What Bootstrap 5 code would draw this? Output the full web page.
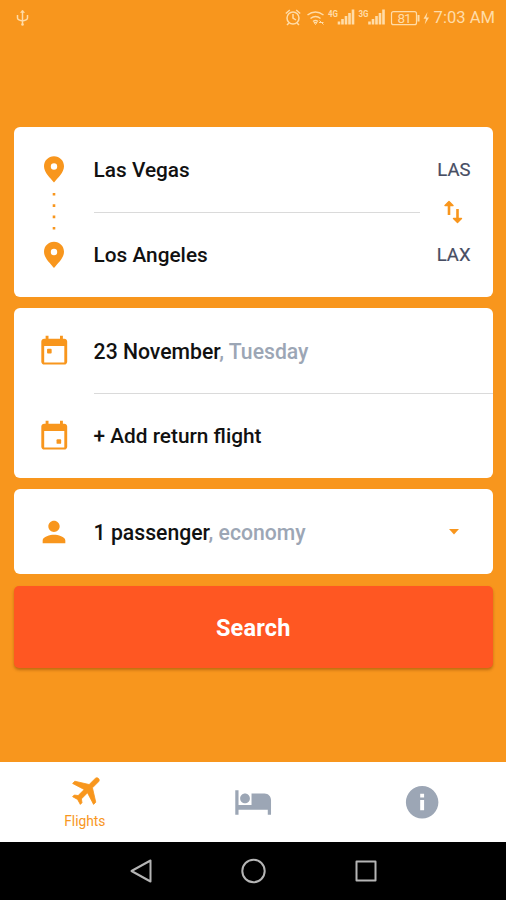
<!DOCTYPE html>
<html lang="en">
<head>
<meta charset="utf-8">
<meta name="viewport" content="width=device-width, initial-scale=1">
<title>Flights</title>
<link href="https://cdn.jsdelivr.net/npm/bootstrap@5.3.0/dist/css/bootstrap.min.css" rel="stylesheet">
<style>
  :root { --brand: #f8961d; --action: #ff5722; --muted: #9ca6b5; }
  body { font-family: Roboto, sans-serif; background: var(--brand); }
  svg { display: block; flex: none; }
  .app-screen { height: 900px; overflow: hidden; background: var(--brand); }
  .status-bar { height: 36px; color: #ffdca8; padding-left: 16px; padding-right: 11px; }
  .status-bar .clock { font-size: 16.6px; line-height: 36px; }
  .search-form { padding: 91px 13.5px 0 14px; gap: 11px; }
  .panel { border: 0; border-radius: 6px; color: #111; font-size: 20.8px; font-weight: 500; }
  .field-row { height: 85px; padding-top: 2px; }
  .icon-cell { width: 79.6px; height: 85px; color: var(--brand); }
  .airport-code { color: #474d63; font-weight: 400; font-size: 18.5px; -webkit-text-stroke: .2px #474d63; }
  .route-side { width: 73px; padding-right: 22px; }
  .hint { color: var(--muted); }
  .field-wide { font-size: 21.2px; }
  .rule { height: 86px; margin-bottom: -1px; border-bottom: 1px solid #dadada; }
  .btn-search { height: 82px; margin-top: 1px; padding-top: 9px; border: 0; border-radius: 5px; background: var(--action); color: #fff; font-size: 23.5px; font-weight: 700; letter-spacing: .2px; box-shadow: 0 2px 3px rgba(120,60,0,.45); }
  .btn-search:hover { background: var(--action); color: #fff; }
  .tab-bar { height: 80px; color: var(--muted); }
  .tab-bar .active-tab { color: var(--brand); font-size: 13.8px; padding-left: 1px; }
  .system-bar { height: 58px; background: #000; }
</style>
</head>
<body>
<div class="app-screen d-flex flex-column">
  <header class="status-bar d-flex align-items-center justify-content-between">
    <svg width="13" height="18" viewBox="0 0 13 18" fill="none" stroke="currentColor" stroke-width="1.5"><path d="M6.500 2v13M1.500 6v3q0 2 5 3q5-1 5-3V6"/><path d="M4.500 3.500l2-2.500 2 2.500z" fill="currentColor" stroke-width=".5"/><circle cx="6.500" cy="15.500" r="1.300" fill="currentColor" stroke="none"/></svg>
    <div class="d-flex align-items-center">
      <svg width="149" height="36" viewBox="285 0 149 36" fill="none" stroke="currentColor" stroke-width="1.500">
        <circle cx="293" cy="18" r="6"/><path d="M293 14v4l3 2M285.800 13.500l4-3.500M300.200 13.500l-4-3.500M289 23l-2 2M297 23l2 2"/>
        <path d="M307.500 15q8-6 16 0M310.500 18.500q5-4 10 0M313 21.500q2.500-2 5 0"/><path d="M315.500 24.500l-1.500-2h3zM319 22.500h4.500M319.500 20.500l4 4" stroke-width="1"/>
        <text x="328" y="16.500" font-size="8.500" font-weight="700" fill="currentColor" stroke="none" textLength="10" lengthAdjust="spacingAndGlyphs">4G</text>
        <path stroke-width="2.600" d="M339 24.500v-3M342.500 24.500v-5.500M346 24.500v-8.500M349.500 24.500v-11.500M353 24.500v-15M369.500 24.500v-3M373 24.500v-5.500M376.500 24.500v-8.500M380 24.500v-11.500M383.500 24.500v-15"/>
        <text x="358.500" y="16.500" font-size="8.500" font-weight="700" fill="currentColor" stroke="none" textLength="10" lengthAdjust="spacingAndGlyphs">3G</text>
        <rect x="391.500" y="11.700" width="25" height="13" rx="2" stroke-width="1.200"/><path d="M418.500 15v6.500" stroke-width="2"/>
        <text x="397.500" y="23.100" font-size="13.500" fill="currentColor" stroke="none" textLength="14">81</text>
        <path d="M427.500 12l-4 6.800h2.500l-1.300 5.700 4.300-7h-2.700z" fill="currentColor" stroke="none"/>
      </svg>
      <span class="clock">7:03 AM</span>
    </div>
  </header>

  <main class="search-form d-flex flex-column flex-grow-1">
    <section class="panel card flex-row">
      <div class="icon-cell h-auto">
        <svg width="79" height="170" viewBox="-.5 0 79 170" fill="currentColor">
          <path id="pin" fill-rule="evenodd" d="M39.500 29.300c-5.600 0-10 4.400-10 9.900 0 6.300 6.200 11.500 10 16.300 3.800-4.800 10-10 10-16.300 0-5.500-4.400-9.900-10-9.900zm0 7a3.200 3.200 0 1 1 0 6.400 3.200 3.200 0 0 1 0-6.400z"/>
          <use href="#pin" y="85.500"/>
          <path d="M38.200 66h2.600v2.600h-2.600zM38.200 77.300h2.600v2.600h-2.600zM38.200 88.600h2.600v2.600h-2.600zM38.200 100h2.600v2.600h-2.600z"/>
        </svg>
      </div>
      <div class="flex-grow-1">
        <div class="field-row rule d-flex align-items-center">Las Vegas</div>
        <div class="field-row d-flex align-items-center">Los Angeles</div>
      </div>
      <div class="route-side d-flex flex-column align-items-end">
        <div class="airport-code field-row d-flex align-items-center">LAS</div>
        <div class="airport-code field-row d-flex align-items-center">LAX</div>
        <svg class="position-absolute top-50 translate-middle-y me-1" width="32" height="28" viewBox="1.500 0 32 28" fill="none" stroke="#f8961d" stroke-width="2.600"><path d="M15.500 4v13M24 11v12"/><path d="M11.500 7.500l4-4 4 4zM20 20.500l4 4 4-4z" fill="#f8961d" stroke-width="1.400" stroke-linejoin="round"/></svg>
      </div>
    </section>

    <section class="panel card">
      <div class="d-flex">
        <div class="icon-cell d-flex align-items-center justify-content-center pt-1">
          <svg width="34.500" height="34.500" viewBox="0 .4 24 24" fill="currentColor"><path id="cal" d="M19 3h-1V1h-2v2H8V1H6v2H5c-1.100 0-2 .9-2 2v14c0 1.100.9 2 2 2h14c1.100 0 2-.9 2-2V5c0-1.100-.9-2-2-2zm0 16.500H5V8h14z"/><rect x="7" y="10" width="3.200" height="3.200" rx=".6"/></svg>
        </div>
        <div class="field-row field-wide rule d-flex align-items-center flex-grow-1"><span>23 November<span class="hint">, Tuesday</span></span></div>
      </div>
      <div class="d-flex">
        <div class="icon-cell d-flex align-items-center justify-content-center pt-1">
          <svg width="34.500" height="34.500" viewBox="0 .4 24 24" fill="currentColor"><use href="#cal"/><rect x="13.600" y="13.800" width="3.200" height="3.200" rx=".6"/></svg>
        </div>
        <div class="field-row d-flex align-items-center">+ Add return flight</div>
      </div>
    </section>

    <section class="panel card flex-row align-items-center">
      <div class="icon-cell d-flex align-items-center justify-content-center">
        <svg width="34" height="34" viewBox="0 0 24 24" fill="currentColor"><path d="M12 12c2.210 0 4-1.790 4-4s-1.790-4-4-4-4 1.790-4 4 1.790 4 4 4zm0 2c-2.670 0-8 1.340-8 4v2h16v-2c0-2.660-5.330-4-8-4z"/></svg>
      </div>
      <div class="field-row field-wide d-flex align-items-center flex-grow-1"><span>1 passenger<span class="hint">, economy</span></span></div>
      <svg class="me-4" width="30" height="20" viewBox="0 0 30 20" fill="#f8961d"><path d="M10 7h10l-5 5.500z"/></svg>
    </section>

    <button type="button" class="btn btn-search w-100">Search</button>
  </main>

  <nav class="tab-bar row g-0 bg-white">
    <div class="col-4 active-tab d-flex flex-column align-items-center">
      <svg width="40" height="49" viewBox="0 0 40 49" fill="currentColor" stroke="currentColor" stroke-width=".5" stroke-linejoin="round"><path transform="translate(22.500 27.500) rotate(45) scale(1.560) translate(-11.500 -12)" d="M21 16v-2l-8-5V3.500c0-.83-.67-1.500-1.500-1.500S10 2.670 10 3.500V9l-8 5v2l8-2.500V19l-2 1.500V22l3.500-1 3.500 1v-1.500L13 19v-5.500l8 2.500z"/></svg>
      <span>Flights</span>
    </div>
    <div class="col-4 d-flex align-items-center justify-content-center">
      <svg width="39" height="39" viewBox="-.4 .5 24 24" fill="currentColor"><path d="M7 13c1.660 0 3-1.340 3-3S8.660 7 7 7s-3 1.340-3 3 1.340 3 3 3zm12-6h-8v7H3V5H1v15h2v-3h18v3h2v-9c0-2.210-1.790-4-4-4z"/></svg>
    </div>
    <div class="col-4 d-flex align-items-center justify-content-center">
      <svg width="39" height="39" viewBox="-.4 .2 24 24" fill="currentColor"><path d="M12 2C6.480 2 2 6.480 2 12s4.480 10 10 10 10-4.480 10-10S17.520 2 12 2zm1.200 15h-2.400v-6.300h2.400zm0-7.900h-2.400V6.800h2.400z"/></svg>
    </div>
  </nav>

  <footer class="system-bar d-flex justify-content-center align-items-center">
    <svg width="250" height="30" viewBox="0 0 250 30" fill="none" stroke="#b5b5b5" stroke-width="2" stroke-linejoin="round"><path d="M22.500 4.500v21L3.500 15z"/><circle cx="125.500" cy="15" r="11.200"/><path d="M228.500 5.500h19v19h-19z"/></svg>
  </footer>
</div>
<script src="https://cdn.jsdelivr.net/npm/bootstrap@5.3.0/dist/js/bootstrap.bundle.min.js"></script>
</body>
</html>
